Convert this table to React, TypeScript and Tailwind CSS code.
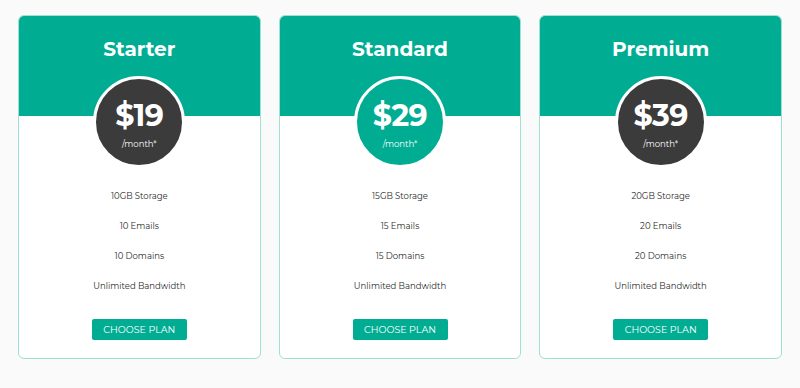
import React from "react";

const plans = [
  { name: "Starter", price: "$19", n: 10, circle: "bg-[#3b3b3b]" },
  { name: "Standard", price: "$29", n: 15, circle: "bg-[#00ad93]" },
  { name: "Premium", price: "$39", n: 20, circle: "bg-[#3b3b3b]" },
];

export default function App() {
  return (
    <div
      className="w-[800px] h-[388px] bg-[#fafafa] px-[18px] pt-[15px] flex gap-[18px]"
      style={{ fontFamily: "Montserrat, 'Open Sans', 'Liberation Sans', sans-serif" }}
    >
      {plans.map((p) => (
        <div
          key={p.name}
          className="flex-1 h-[344px] bg-white border border-[#9fdfd4] rounded-[6px] overflow-hidden flex flex-col items-center"
        >
          <div className="w-full h-[100px] bg-[#00ad93] flex justify-center pt-[19px] shrink-0">
            <h2 className="text-white font-bold text-[20px] leading-[28px]">{p.name}</h2>
          </div>
          <div
            className={`mt-[-40px] w-[92px] h-[92px] rounded-full border-[3px] border-white ${p.circle} flex flex-col items-center shrink-0`}
          >
            <div className="text-white font-bold text-[30px] leading-[36px] mt-[19px] tracking-[-0.5px]">{p.price}</div>
            <div className="text-white text-[8.5px] leading-[12px] mt-[4px]">/month*</div>
          </div>
          <div className="mt-[21px] flex flex-col items-center text-[#2a2a2a] text-[8.5px] leading-[14px] gap-[16px]">
            <div>{p.n}GB Storage</div>
            <div>{p.n} Emails</div>
            <div>{p.n} Domains</div>
            <div>Unlimited Bandwidth</div>
          </div>
          <button className="mt-[26px] w-[95px] h-[21px] bg-[#00ad93] rounded-[2px] text-white text-[9.5px] leading-[21px]">
            CHOOSE PLAN
          </button>
        </div>
      ))}
    </div>
  );
}
